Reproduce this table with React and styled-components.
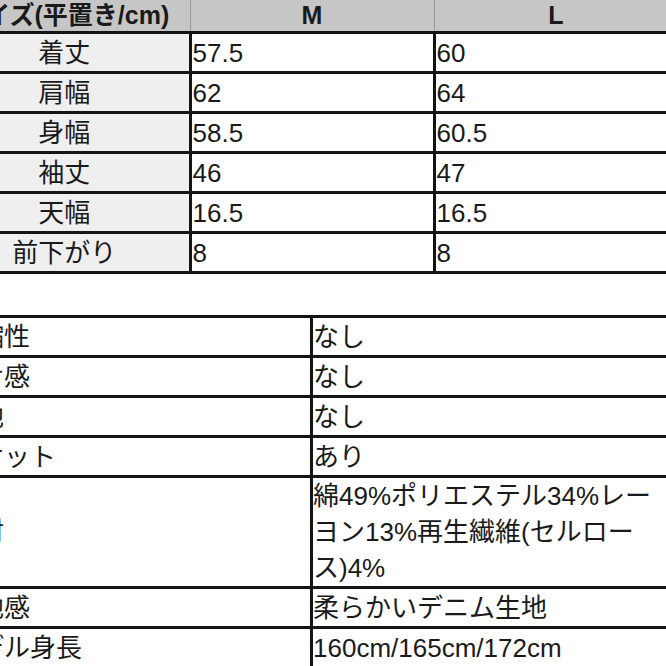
import React from 'react'
import styled, { createGlobalStyle } from 'styled-components'

const GlobalStyle = createGlobalStyle`
  html, body {
    margin: 0;
    padding: 0;
    background: #fff;
    overflow: hidden;
  }
  body {
    font-family: "Liberation Sans", "Noto Sans CJK JP", sans-serif;
    color: #1a1a1a;
  }
`;

const Page = styled.div`
  width: 666px;
  height: 666px;
  overflow: hidden;
  display: flex;
  flex-direction: column;
`;

const SizeTable = styled.table`
  border-collapse: collapse;
  table-layout: fixed;
  width: 738px;
  margin: 0 0 0 -60px;
  font-size: 26px;
`;

const HeadCell = styled.th`
  height: 31px;
  padding: 0;
  background: #c6c6c6;
  font-weight: bold;
  font-size: 25px;
  line-height: 1;
  text-align: center;
  vertical-align: middle;
  border-left: 1px solid #9a9a9a;
  border-right: 1px solid #9a9a9a;
  border-bottom: 2px solid #8a8a8a;
  &:first-child {
    border-left: none;
  }
`;

const LabelCell = styled.td`
  height: 37px;
  padding: 0;
  background: #efefef;
  text-align: center;
  border: 3px solid #141414;
  border-left: none;
  line-height: 1;
`;

const ValueCell = styled.td`
  height: 37px;
  padding: 0 0 0 1px;
  text-align: left;
  border: 3px solid #141414;
  line-height: 1;
`;

const Spacer = styled.div`
  height: 41px;
  flex: none;
`;

const SpecTable = styled.table`
  border-collapse: collapse;
  table-layout: fixed;
  width: 780px;
  margin-left: -52px;
  font-size: 26px;
`;

const SpecLabel = styled.td`
  width: 358px;
  padding: 0 0 0 4px;
  height: ${p => (p.$tall ? 105 : 37)}px;
  vertical-align: middle;
  border: 3px solid #141414;
  border-left: none;
  white-space: nowrap;
  line-height: 1;
`;

const SpecValue = styled.td`
  padding: 0;
  vertical-align: middle;
  border: 3px solid #141414;
  white-space: nowrap;
  line-height: ${p => (p.$tall ? '36px' : 1)};
`;

const sizes = [
  ['着丈', '57.5', '60'],
  ['肩幅', '62', '64'],
  ['身幅', '58.5', '60.5'],
  ['袖丈', '46', '47'],
  ['天幅', '16.5', '16.5'],
  ['前下がり', '8', '8'],
];

const specs = [
  ['伸縮性', 'なし'],
  ['透け感', 'なし'],
  ['裏地', 'なし'],
  ['ポケット', 'あり'],
  ['素材', ['綿49%ポリエステル34%レー', 'ヨン13%再生繊維(セルロー', 'ス)4%']],
  ['生地感', '柔らかいデニム生地'],
  ['モデル身長', '160cm/165cm/172cm'],
];

export default function App() {
  return (
    <Page>
      <GlobalStyle />
      <SizeTable>
        <colgroup>
          <col style={{ width: 250 }} />
          <col style={{ width: 244 }} />
          <col style={{ width: 244 }} />
        </colgroup>
        <thead>
          <tr>
            <HeadCell>サイズ(平置き/cm)</HeadCell>
            <HeadCell>M</HeadCell>
            <HeadCell>L</HeadCell>
          </tr>
        </thead>
        <tbody>
          {sizes.map(([label, m, l]) => (
            <tr key={label}>
              <LabelCell>{label}</LabelCell>
              <ValueCell>{m}</ValueCell>
              <ValueCell>{l}</ValueCell>
            </tr>
          ))}
        </tbody>
      </SizeTable>
      <Spacer />
      <SpecTable>
        <tbody>
          {specs.map(([label, value]) => {
            const tall = Array.isArray(value)
            return (
              <tr key={label}>
                <SpecLabel $tall={tall}>{label}</SpecLabel>
                <SpecValue $tall={tall}>
                  {tall
                    ? value.map((line, i) => (
                        <React.Fragment key={i}>
                          {line}
                          {i < value.length - 1 && <br />}
                        </React.Fragment>
                      ))
                    : value}
                </SpecValue>
              </tr>
            )
          })}
        </tbody>
      </SpecTable>
    </Page>
  )
}
